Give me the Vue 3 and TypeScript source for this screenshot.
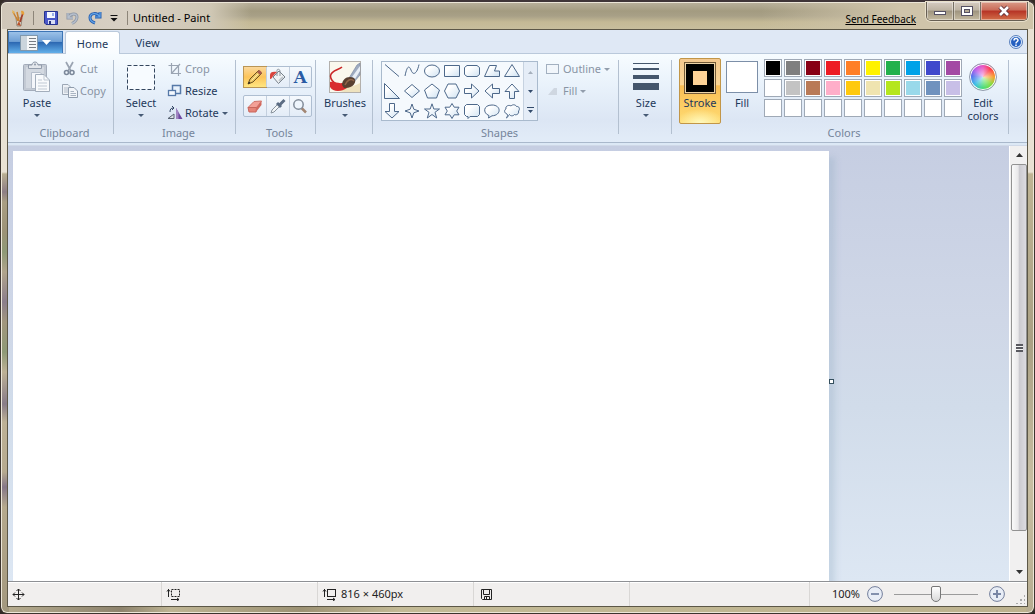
<script setup lang="ts">
import { ref } from 'vue'

const shapes: string[] = [
  'M1 1.5L15 13.5',
  'M1 13C3 3 5 2 7 7C9 13 13 11 15 1.5',
  'M15.5 8A7.5 6 0 1 1 .5 8A7.5 6 0 1 1 15.5 8Z',
  'M.5 2.5H15.5V13.5H.5Z',
  'M3 2.5H13L15.5 4.5V11.5L13 13.5H3L.5 11.5V4.5Z',
  'M.5 13.5L5.5 2.5H12.5L10.5 8H15.5V13.5Z',
  'M8 1.5L15.5 13.5H.5Z',
  'M.5 .5V15.5H15.5Z',
  'M8 1.5L15.5 8L8 14.5L.5 8Z',
  'M8 1L15.5 7L12.5 15H3.5L.5 7Z',
  'M4 1H12L15.5 8L12 15H4L.5 8Z',
  'M.5 5.5H7.5V1L15 8L7.5 15V10.5H.5Z',
  'M15.5 5.5H8.5V1L1 8L8.5 15V10.5H15.5Z',
  'M5.5 15.5V8.5H1L8 1L15 8.5H10.5V15.5Z',
  'M5.5 .5V8.5H1L8 15L15 8.5H10.5V.5Z',
  'M8 1L9.8 6.2L15 8L9.8 9.8L8 15L6.2 9.8L1 8L6.2 6.2Z',
  'M8 .8L9.8 6H15.5L11 9.3L12.7 15L8 11.5L3.3 15L5 9.3L.5 6H6.2Z',
  'M8 .5L10.2 4.2H15L12.7 8L15 11.8H10.2L8 15.5L5.8 11.8H1L3.3 8L1 4.2H5.8Z',
  'M2.5 1.5H13.5L15.5 3.5V11.5L13.5 13.5H6L4 15.5V13.5H2.5L.5 11.5V3.5Z',
  'M5 12.6C-1.5 10 -.8 2 8 2C17.5 2 17.5 12.5 8 12.8L4.5 15Z',
  'M3 11C0 10 0 7 2 6C1 3 5 1.5 7 3C9 .8 12 2 12.5 3.5C15 3 16.5 6 14.5 8C15.5 11 12 12.5 10.5 11.5C9 13.5 6 13 5.5 11.5C4 13 4 14 2.5 15C3.500 13 4 12 3 11Z'
]

const colors: string[] = [
  '#000000', '#7f7f7f', '#880015', '#ed1c24', '#ff7f27', '#fff200', '#22b14c', '#00a2e8', '#3f48cc', '#a349a4',
  '#ffffff', '#c3c3c3', '#b97a57', '#ffaec9', '#ffc90e', '#efe4b0', '#b5e61d', '#99d9ea', '#7092be', '#c8bfe7',
  '#ffffff', '#ffffff', '#ffffff', '#ffffff', '#ffffff', '#ffffff', '#ffffff', '#ffffff', '#ffffff', '#ffffff'
]

const zoom = ref(100)
const tool = ref('Pencil')
</script>

<template>
  <div class="window">
    <header class="titlebar">
      <svg class="app-icon" width="16" height="18" viewBox="0 0 16 18">
        <path d="M5 9H11L10 17H6Z" fill="#d9d4c8" stroke="#85796a" stroke-width=".8" />
        <path d="M2 3L7 12M6 3L8 12" stroke="#c88130" stroke-width="1.500" />
        <path d="M12 4L9 13" stroke="#a3402a" stroke-width="1.800" />
        <path d="M10 2C12 1 14 3 13 6L10.500 5Z" fill="#e5a03c" />
        <path d="M1 1L4 3L2 5Z" fill="#e6b350" /><path d="M8 12L10 17L6 16Z" fill="#b9522b" />
      </svg>
      <span class="bar-sep"></span>
      <button class="quick save" aria-label="Save">
        <svg width="16" height="16" viewBox="0 0 16 16">
          <path d="M1.500 1.500H14.500V14.500H3L1.500 13Z" fill="#4a57c8" stroke="#26338f" />
          <path d="M4 2H12V8H4Z" fill="#f4f7ff" /><path d="M9 3H11V6H9Z" fill="#9ab0e8" />
          <path d="M5 10H12V14H5Z" fill="#d8def4" /><path d="M6 11H8V14H6Z" fill="#27337f" />
        </svg>
      </button>
      <button class="quick" aria-label="Undo">
        <svg width="16" height="16" viewBox="0 0 16 16"><path d="M3 3V8H8M3.500 7.500C6 3 12 3 12 7C12 10 10 12 7 13.500" fill="none" stroke="#8d96a5" stroke-width="3" /><path d="M3 3V8H8M3.500 7.500C6 3 12 3 12 7C12 10 10 12 7 13.500" fill="none" stroke="#b6bfcc" stroke-width="1.400" /></svg>
      </button>
      <button class="quick" aria-label="Redo">
        <svg width="16" height="16" viewBox="0 0 16 16"><path d="M13 2V7H8M12.500 6.500C10 2 3 3 3 7.500C3 10 5 12 8 13" fill="none" stroke="#285fae" stroke-width="3" /><path d="M13 2V7H8M12.500 6.500C10 2 3 3 3 7.500C3 10 5 12 8 13" fill="none" stroke="#62a3e8" stroke-width="1.200" /></svg>
      </button>
      <button class="quick more" aria-label="Customize toolbar">
        <svg width="8" height="8" viewBox="0 0 8 8"><path d="M.5 1H7.500V2H.5ZM.5 4H7.500L4 7.500Z" fill="#111" /></svg>
      </button>
      <span class="bar-sep"></span>
      <h1>Untitled - Paint</h1>
      <a class="feedback" href="#">Send Feedback</a>
      <div class="controls">
        <button aria-label="Minimize"><svg width="14" height="10" viewBox="0 0 14 10"><rect x="1.500" y="5.500" width="11" height="3" fill="#fff" stroke="#555063" /></svg></button>
        <button aria-label="Maximize"><svg width="14" height="10" viewBox="0 0 14 10"><rect x="1.500" y=".5" width="11" height="9" fill="#fff" stroke="#555063" /><rect x="4.500" y="3.500" width="5" height="3" fill="#b5aa95" stroke="#555063" /></svg></button>
        <button class="close" aria-label="Close"><svg width="14" height="12" viewBox="0 0 14 12"><path d="M3 2L11 10M11 2L3 10" stroke="#5c3038" stroke-width="4.500" /><path d="M3 2L11 10M11 2L3 10" stroke="#fff" stroke-width="2.600" /></svg></button>
      </div>
    </header>

    <main class="client">
      <nav class="tabs">
        <button class="file" aria-label="Paint menu">
          <svg width="18" height="16" viewBox="0 0 18 16">
            <rect x=".5" y=".5" width="17" height="15" fill="#f5f7f8" stroke="#8098ac" />
            <path d="M1 1H7V15H1Z" fill="#cbd5dc" /><path d="M9 3.500H16M9 6.500H16M9 9.500H16M9 12.500H16" stroke="#777d83" />
          </svg>
          <svg width="9" height="5" viewBox="0 0 9 5"><path d="M0 0H9L4.500 5Z" fill="#fff" /></svg>
        </button>
        <button class="tab active">Home</button>
        <button class="tab">View</button>
        <button class="help" aria-label="Help">
          <svg width="14" height="14" viewBox="0 0 14 14"><circle cx="7" cy="7" r="6.500" fill="#dce9fb" stroke="#5c82bd" /><circle cx="7" cy="7" r="5" fill="#2560c0" /><path d="M5 5.500C5 3 9 3 9 5.300C9 6.800 7 6.700 7 8.500M7 9.500V11" fill="none" stroke="#fff" stroke-width="1.500" /></svg>
        </button>
      </nav>

      <div class="ribbon">
        <section class="group clipboard">
          <div class="body">
            <button class="big">
              <span class="pic">
                <svg width="30" height="34" viewBox="0 0 30 34">
                  <rect x="1.500" y="4.500" width="23" height="26" rx="1" fill="#c3cad4" stroke="#a3acba" />
                  <rect x="4" y="7" width="18" height="21" fill="#d3d9e1" />
                  <path d="M6.500 8.500V5H10C10 1 16 1 16 5H19.500V8.500Z" fill="#e3e7ec" stroke="#929dac" /><circle cx="13" cy="4.500" r="1" fill="#8d99a9" />
                  <path d="M9.500 12.500H18L22 16V28.500H9.500Z" fill="#f4f6fa" stroke="#b4bdca" />
                  <path d="M13.500 14.500H22L27.500 20V31.500H13.500Z" fill="#f8fafc" stroke="#a3aebc" />
                  <path d="M22 15V20H27M16 20H20M16 23H25M16 26H25M16 29H25" fill="none" stroke="#c0c9d4" />
                </svg>
              </span>
              <span>Paste</span><i class="arrow"></i>
            </button>
            <div class="stack">
              <button class="small dim"><svg width="16" height="16" viewBox="0 0 16 16"><path d="M4 1L9 10M11 1L6 10" stroke="#9aa4b2" stroke-width="1.700" /><circle cx="4.500" cy="11.500" r="2" fill="none" stroke="#7c899b" stroke-width="1.600" /><circle cx="10" cy="11.500" r="2" fill="none" stroke="#7c899b" stroke-width="1.600" /></svg>Cut</button>
              <button class="small dim"><svg width="16" height="16" viewBox="0 0 16 16"><path d="M.5 1.500H6L8.500 4V11.500H.5Z" fill="#edf1f6" stroke="#9ca7b5" /><path d="M2 5H6M2 7H6M2 9H6" stroke="#b4bdc9" /><path d="M6.500 4.500H12L15.500 8V14.500H6.500Z" fill="#f2f5f9" stroke="#8f9cac" /><path d="M8.500 8.500H12M8.500 10.500H14M8.500 12.500H14" stroke="#a9b4c2" /></svg>Copy</button>
            </div>
          </div>
          <h2>Clipboard</h2>
        </section>

        <section class="group image">
          <div class="body">
            <button class="big">
              <span class="pic"><svg width="30" height="34" viewBox="0 0 30 34"><rect x="1.500" y="5.500" width="27" height="24" fill="#f7fbff" stroke="#34465e" stroke-dasharray="4 2" /></svg></span>
              <span>Select</span><i class="arrow"></i>
            </button>
            <div class="stack">
              <button class="small dim"><svg width="16" height="16" viewBox="0 0 16 16"><path d="M4.500 2V12.500H14M1.500 4.500H11.500V15M5 12L13 3" fill="none" stroke="#9aa4b2" stroke-width="1.200" /></svg>Crop</button>
              <button class="small"><svg width="16" height="16" viewBox="0 0 16 16"><rect x="5.500" y="2.500" width="8" height="8" fill="#e8f2fc" stroke="#5679a8" stroke-width="1.500" /><rect x="1.500" y="7.500" width="7" height="5" fill="#f5faff" stroke="#5679a8" stroke-width="1.300" /></svg>Resize</button>
              <button class="small"><svg width="16" height="16" viewBox="0 0 16 16"><path d="M9 3V14H15.500Z" fill="#6d48a0" /><path d="M9 3V14H11.500V7Z" fill="#a185c1" /><path d="M1 13.500L7 9V13.500Z" fill="#dce1e6" stroke="#586372" /><path d="M3 7C3 4 4 3 6.500 3M5 1L7 3L5 5" fill="none" stroke="#344765" /></svg>Rotate<i class="arrow"></i></button>
            </div>
          </div>
          <h2>Image</h2>
        </section>

        <section class="group tools">
          <div class="body tool-rows">
            <div class="tool-row">
              <button :class="{ on: tool === 'Pencil' }" aria-label="Pencil" @click="tool = 'Pencil'"><svg width="18" height="18" viewBox="0 0 18 18"><path d="M2 16L4 11L12.500 2.500L15.500 5.500L7 14Z" fill="#eac365" stroke="#6b521e" /><path d="M11 4L14 7L16 4.500L13.500 2Z" fill="#a95c4d" /><path d="M5.500 12.500L12 6" stroke="#fff0a6" /><path d="M2 16L3 13.500L4.500 15Z" fill="#222" /></svg></button>
              <button :class="{ on: tool === 'Bucket' }" aria-label="Fill with color" @click="tool = 'Bucket'"><svg width="18" height="18" viewBox="0 0 18 18"><path d="M4 9L10 3L16 9L9.500 15.500Z" fill="#eff2f4" stroke="#77818b" /><path d="M8 8V2.500C8 .5 11 1 11 3V8" fill="none" stroke="#8b949e" /><path d="M8 4C4 3 1 4 1 7V11C3 11 3 9 5 7Z" fill="#d9443d" /><path d="M10 13L14 9" stroke="#c0c7cd" stroke-width="2" /></svg></button>
              <button :class="{ on: tool === 'Text' }" class="letter" @click="tool = 'Text'">A</button>
            </div>
            <div class="tool-row">
              <button :class="{ on: tool === 'Eraser' }" aria-label="Eraser" @click="tool = 'Eraser'"><svg width="18" height="18" viewBox="0 0 18 18"><path d="M2 10.500L8 4.500L15.500 4L10.500 10.500Z" fill="#f3a096" stroke="#d0746a" /><path d="M2 10.500H10.500L10 15H3Z" fill="#e58478" stroke="#c9665c" /><path d="M10.500 10.500L15.500 4V8L10 15Z" fill="#d2695e" /></svg></button>
              <button :class="{ on: tool === 'Picker' }" aria-label="Color picker" @click="tool = 'Picker'"><svg width="18" height="18" viewBox="0 0 18 18"><path d="M2 16L3 13L9 7L11 9L5 15Z" fill="#f3f6f8" stroke="#89939d" /><path d="M8 6L12 10M10.500 8L15.500 3" stroke="#5c6d84" stroke-width="3" /></svg></button>
              <button :class="{ on: tool === 'Zoom' }" aria-label="Magnifier" @click="tool = 'Zoom'"><svg width="18" height="18" viewBox="0 0 18 18"><path d="M10.500 11L15 15.500" stroke="#a28673" stroke-width="2.500" /><circle cx="7.500" cy="7.500" r="4.700" fill="#eef5fc" stroke="#818c99" stroke-width="1.500" /></svg></button>
            </div>
          </div>
          <h2>Tools</h2>
        </section>

        <section class="group brushes">
          <div class="body">
            <button class="big">
              <span class="pic">
                <svg width="32" height="32" viewBox="0 0 32 32">
                  <rect x=".5" y=".5" width="31" height="31" fill="#faf8ed" stroke="#b3b0ac" />
                  <path d="M1 28L15 31H31V22C22 28 10 24 1 28Z" fill="#eee2be" />
                  <path d="M13 6C10 9 2 9 1.500 15C1.500 19 5 22 9 24" fill="none" stroke="#c92524" stroke-width="1.500" />
                  <path d="M1 21C6 20 10 24 17 21L18 27C12 31 4 31 1 26Z" fill="#d92c2e" />
                  <path d="M20 17L28 4L31 2V14L25 21Z" fill="#9eabc0" stroke="#76839c" stroke-width=".6" /><path d="M23 16L31 5V10L26 18Z" fill="#e8eef5" />
                  <path d="M13 24C13 18 19 14 25 17C29 21 23 28 15 27Z" fill="#594030" /><path d="M16 24C18 19 22 17 25 20" fill="none" stroke="#91664a" stroke-width="1.500" />
                </svg>
              </span>
              <span>Brushes</span><i class="arrow"></i>
            </button>
          </div>
        </section>

        <section class="group shapes">
          <div class="body">
            <div class="gallery">
              <div class="shape-grid">
                <button v-for="(d, i) in shapes" :key="i" :aria-label="`Shape ${i + 1}`">
                  <svg width="16" height="16" viewBox="0 0 16 16">
                    <defs><linearGradient :id="`g${i}`" x2="1" y2="1"><stop offset=".3" stop-color="#fff" /><stop offset="1" stop-color="#cfe2f2" /></linearGradient></defs>
                    <path :d="d" :fill="i < 2 ? 'none' : `url(#g${i})`" stroke="#4d688a" />
                  </svg>
                </button>
              </div>
              <div class="gallery-nav">
                <button aria-label="Previous shapes"><svg width="7" height="8" viewBox="0 0 7 8"><path d="M1 6H6L3.500 3Z" fill="#a5afbc" /></svg></button>
                <button aria-label="Next shapes"><svg width="7" height="8" viewBox="0 0 7 8"><path d="M1 3H6L3.500 6Z" fill="#334b6b" /></svg></button>
                <button aria-label="All shapes"><svg width="7" height="8" viewBox="0 0 7 8"><path d="M0 1H7V2H0ZM1 4H6L3.500 7Z" fill="#334b6b" /></svg></button>
              </div>
            </div>
            <div class="stack">
              <button class="small dim"><svg width="16" height="16" viewBox="0 0 16 16"><rect x="1.500" y="3.500" width="12" height="9" fill="#f1f6fb" stroke="#a2b0c0" /></svg>Outline<i class="arrow"></i></button>
              <button class="small dim"><svg width="16" height="16" viewBox="0 0 16 16"><path d="M3 12L9 5L12 5V12Z" fill="#cfd7e1" /></svg>Fill<i class="arrow"></i></button>
            </div>
          </div>
          <h2>Shapes</h2>
        </section>

        <section class="group size">
          <div class="body">
            <button class="big">
              <span class="pic"><svg width="26" height="32" viewBox="0 0 26 32"><path d="M0 2H26V3H0ZM0 7H26V9H0ZM0 14H26V18H0ZM0 22H26V29H0Z" fill="#44566c" /></svg></span>
              <span>Size</span><i class="arrow"></i>
            </button>
          </div>
        </section>

        <section class="group colors">
          <div class="body">
            <button class="big stroke"><span class="pic"><b class="swatch ink"></b></span><span>Stroke</span></button>
            <button class="big fill"><span class="pic"><b class="swatch"></b></span><span>Fill</span></button>
            <div class="palette">
              <button v-for="(c, i) in colors" :key="i" :style="{ backgroundColor: c }" :aria-label="`Color ${i + 1}`"></button>
            </div>
            <button class="big edit"><span class="pic"><b class="wheel"></b></span><span>Edit colors</span></button>
          </div>
          <h2>Colors</h2>
        </section>
      </div>

      <div class="workspace">
        <div class="desk">
          <div class="paper"><span class="handle"></span></div>
        </div>
        <div class="scroll">
          <button aria-label="Scroll up"><svg width="7" height="4" viewBox="0 0 7 4"><path d="M0 4H7L3.500 0Z" fill="#333" /></svg></button>
          <div class="track"><div class="thumb"><i></i></div></div>
          <button aria-label="Scroll down"><svg width="7" height="4" viewBox="0 0 7 4"><path d="M0 0H7L3.500 4Z" fill="#333" /></svg></button>
        </div>
      </div>

      <footer class="status">
        <div class="cell"><svg width="13" height="13" viewBox="0 0 13 13"><path d="M6.500 1V12M1 6.500H12M4.500 3L6.500 1L8.500 3M4.500 10L6.500 12L8.500 10M3 4.500L1 6.500L3 8.500M10 4.500L12 6.500L10 8.500" fill="none" stroke="#222" /></svg></div>
        <div class="cell"><svg width="15" height="13" viewBox="0 0 15 13"><path d="M2.500 1V9M1 3.500L2.500 1.500L4 3.500M5 11.500H13M11 10L13 11.500L11 13" fill="none" stroke="#222" /><rect x="5.500" y="1.500" width="8" height="7" fill="none" stroke="#222" stroke-dasharray="2 1" /></svg></div>
        <div class="cell"><svg width="15" height="13" viewBox="0 0 15 13"><path d="M2.500 1V9M1 3.500L2.500 1.500L4 3.500M5 11.500H13M11 10L13 11.500L11 13" fill="none" stroke="#222" /><rect x="5.500" y="1.500" width="8" height="7" fill="none" stroke="#222" /></svg>816 × 460px</div>
        <div class="cell disk"><svg width="13" height="13" viewBox="0 0 13 13"><path d="M1.500 1.500H11.500V11.500H2.500L1.500 10.500ZM3.500 1.500V6.500H9.500V1.500M4.500 11.500V8.500H9.500V11.500M6.500 9V11" fill="none" stroke="#222" /></svg></div>
        <div class="cell spare"></div>
        <div class="zoom">
          <label for="zoom">{{ zoom }}%</label>
          <button aria-label="Zoom out" @click="zoom = Math.max(0, zoom - 10)"><svg width="16" height="16" viewBox="0 0 16 16"><circle cx="8" cy="8" r="7.400" fill="#e8edf6" stroke="#737e9b" /><path d="M4 7H12V9H4Z" fill="#8390ad" /></svg></button>
          <input id="zoom" v-model.number="zoom" type="range" min="0" max="200">
          <button aria-label="Zoom in" @click="zoom = Math.min(200, zoom + 10)"><svg width="16" height="16" viewBox="0 0 16 16"><circle cx="8" cy="8" r="7.400" fill="#e8edf6" stroke="#737e9b" /><path d="M4 7H7V4H9V7H12V9H9V12H7V9H4Z" fill="#7886a5" /></svg></button>
          <i class="grip"></i>
        </div>
      </footer>
    </main>
  </div>
</template>

<style>
body { background: #332b27; }
</style>

<style scoped>
* { box-sizing: border-box; }
button { font: inherit; color: inherit; background: none; border: 0; padding: 0; margin: 0; }
svg { display: block; flex: none; }
h1, h2 { margin: 0; font: inherit; }

.window {
  height: 100vh;
  display: flex;
  flex-direction: column;
  padding: 0 6px 6px;
  border: 1px solid #3c342e;
  border-top: 2px solid #3f3538;
  border-radius: 7px;
  font: 11px/16px "Noto Sans", "Open Sans", sans-serif;
  color: #1e395b;
  background:
    linear-gradient(90deg, #cfc6b8 0, #d8d0c4 130px, #cfc7b4 210px, #cfc7b400 250px) 0 0 / 100% 27px no-repeat,
    linear-gradient(90deg, #c5b89c00 760px, #cfc4aa 900px) 0 0 / 100% 27px no-repeat,
    linear-gradient(#b9b19c 0, #a39b80 9px, #a8a087 14px, #c4b995 20px, #c8be9d 27px) 0 0 / 100% 27px no-repeat,
    linear-gradient(#e8e1d3 0 170px, #b8ae92 172px, #8d7e86 190px, #a99e83 200px, #9c9277 230px, #8e9976 250px, #b0a48c 270px, #8b7e8b 300px, #a1967e 320px, #8e9976 350px, #bdb196 370px, #887c88 402px, #bdb196 420px, #b6aa8f 470px, #867888 485px, #b5a98d 505px, #a3987e 100%) 0 0 / 8px 100% no-repeat,
    linear-gradient(#e8e1d3 0 170px, #bfb494 172px, #aaa084 340px, #c8bea2 480px, #b7ad91 100%) 100% 0 / 8px 100% no-repeat,
    linear-gradient(90deg, #b7ad90, #8e836d 120px, #beb493 170px, #9d9274 300px, #c3ba96 400px, #bdb28e);
  box-shadow: inset 0 0 0 1px #ece6d8;
}

.titlebar { flex: none; height: 27px; display: flex; align-items: center; padding-left: 4px; padding-top: 4px; color: #000; }
.app-icon { margin-right: 6px; }
.bar-sep { width: 1px; height: 14px; background: #8d8579; }
.quick { width: 22px; height: 18px; display: grid; place-items: center; }
.save { margin-left: 6px; }
.more { width: 16px; margin-right: 5px; }
.bar-sep + h1 { margin-left: 5px; margin-top: 1px; }
.feedback { margin-left: auto; margin-right: 10px; margin-top: 2px; color: #000; font-size: 10px; }
.controls { display: flex; align-self: flex-start; height: 19px; margin-top: -4px; border: 1px solid #675f53; border-top: 0; border-radius: 0 0 5px 5px; overflow: hidden; box-shadow: 0 0 0 1px #e9e0cb; }
.controls button { width: 27px; display: grid; place-items: center; background: linear-gradient(#d5cbc0, #bdb3a3 45%, #9e947f 50%, #c5baa0); border-right: 1px solid #777063; box-shadow: inset 0 0 0 1px #ffffff66; }
.controls .close { width: 46px; border: 0; background: linear-gradient(#d99b87, #c96b58 45%, #b63325 50%, #d26e49); }

.client { flex: 1; min-height: 0; display: flex; flex-direction: column; border: 1px solid #5c5747; background: #dce8f5; }

.tabs { flex: none; display: flex; height: 24px; padding-top: 1px; background: #dfe8f5; border-bottom: 1px solid #bac9db; }
.file { width: 55px; margin-right: 2px; display: flex; align-items: center; justify-content: center; gap: 4px; border: 1px solid #3d75b5; border-bottom: 0; background: linear-gradient(#9bc1e8 0, #6e9fd4 45%, #2d69b3 50%, #62b0ea); }
.tab { width: 55px; height: 23px; border: 1px solid transparent; }
.tab.active { height: 24px; background: linear-gradient(#fff, #f8fcff); border-color: #bac9db; border-bottom: 0; border-radius: 3px 3px 0 0; }
.help { margin-left: auto; width: 22px; display: grid; place-items: center; }

.ribbon { flex: none; display: flex; padding: 4px 0 0; background: linear-gradient(#f7fcff 0, #e9f2fb 35%, #dce6f4 75%, #e2ecf8); border-bottom: 1px solid #a9b8cb; }
.group { position: relative; display: flex; flex-direction: column; border-right: 1px solid; border-image: linear-gradient(transparent 4%, #b3c0d0 4% 90%, transparent 90%) 1; }
.clipboard { width: 106px; }
.image { width: 122px; }
.tools { width: 80px; }
.brushes { width: 57px; }
.shapes { width: 246px; }
.size { width: 53px; }
.colors { width: 337px; }
.body { display: flex; height: 66px; padding-left: 7px; }
h2 { height: 18px; line-height: 18px; padding-left: 8px; text-align: center; color: #75859b; }

.big { width: 42px; height: 66px; display: flex; flex-direction: column; align-items: center; line-height: 13px; flex: none; }
.pic { height: 38px; flex: none; display: grid; place-items: center; }
.arrow { width: 0; height: 0; border: 3px solid transparent; border-top-color: #465a75; border-bottom: 0; }
.big .arrow { margin-top: 5px; }
.stack { display: flex; flex-direction: column; align-items: flex-start; }
.small { height: 22px; display: flex; align-items: center; gap: 2px; white-space: nowrap; }
.small .arrow { margin-left: 1px; }
.dim { color: #8994a4; }
.dim .arrow { border-top-color: #929dac; }
.clipboard .body { padding-left: 8px; }
.clipboard .stack { margin-left: 4px; }
.image .body { padding-left: 6px; }
.image .stack { margin-left: 5px; }
.brushes .body { padding-left: 8px; }
.size .body { padding-left: 6px; }

.tool-rows { flex-direction: column; gap: 7px; padding: 8px 3px 0 7px; }
.tool-row { display: grid; grid-template-columns: repeat(3, 1fr); height: 22px; border: 1px solid #aebed1; border-radius: 2px; background: linear-gradient(#f5f9fd, #e3ecf7); }
.tool-row button { display: grid; place-items: center; }
.tool-row button + button { border-left: 1px solid #c3cfde; }
.tool-row .on { background: linear-gradient(#fbd89c, #fcc45a 50%, #ffe681); box-shadow: 0 0 0 1px #b99555; }
.tool-row .letter { font: bold 20px/20px "DejaVu Serif", "Liberation Serif", serif; font-size: 17px; color: #2a5ba4; }

.shapes .body { padding: 3px 0 0 8px; }
.shapes .stack { margin: -3px 0 0 7px; }
.gallery { display: flex; height: 60px; border: 1px solid #a9bacd; background: #f5f9fd; }
.shape-grid { display: grid; grid-template: repeat(3, 20px) / repeat(7, 20px); align-content: center; padding-right: 1px; }
.shape-grid button { display: grid; place-items: center; }
.gallery-nav { width: 14px; display: grid; grid-template-rows: repeat(3, 1fr); background: #e5edf7; border-left: 1px solid #c6d2e0; }
.gallery-nav button { display: grid; place-items: center; }

.swatch { width: 32px; height: 32px; border: 1px solid #7c8fa8; background: #fff; }
.stroke { border: 1px solid #c29648; border-radius: 2px; background: radial-gradient(ellipse 24px 14px at 50% 100%, #fffac0, #fffac000), linear-gradient(#f3c890 0, #fbd595 40%, #f9bd55 42%, #ffdc72); }
.stroke .pic { height: 37px; }
.ink { border-color: #735a38; background: linear-gradient(#fdd297, #fdd297) center / 14px 14px no-repeat, #000; box-shadow: inset 0 0 0 1px #eed4a8; }
.palette { display: grid; grid-template: repeat(3, 18px) / repeat(10, 18px); gap: 2px; padding-top: 1px; margin-left: 1px; }
.palette button { border: 1px solid #9fa9b6; box-shadow: inset 0 0 0 1px #fff; }
.wheel { width: 28px; height: 28px; border: 1px solid #939cac; border-radius: 50%; background: radial-gradient(#ffffffb0 0, #fff0 60%), conic-gradient(#e855bf, #ff3948 12%, #f7a32e 25%, #80de3e 37%, #48db79 50%, #3cbee6 63%, #5674ee 76%, #bd5bea 88%, #e855bf); box-shadow: inset 0 0 0 1px #fff; }

.workspace { flex: 1; min-height: 0; display: flex; margin-top: 2px; background: #e5effa; border-top: 1px solid #d0d9e8; }
.desk { flex: 1; min-width: 0; overflow: hidden; padding: 5px 0 0 5px; background: linear-gradient(#c6cee2, #cfd7e7 40%, #d1dcea 60%, #dde7f3); }
.paper { position: relative; width: 816px; height: 460px; background: #fff; box-shadow: 6px 6px 6px #8fa8c04d; }
.handle { position: absolute; top: 50%; left: 100%; width: 5px; height: 5px; margin-top: -2px; border: 1px solid #344f5e; background: #fff; }
.scroll { width: 18px; flex: none; display: flex; flex-direction: column; padding-left: 1px; background: #f1f0f0; border-left: 1px solid #fff; }
.scroll button { height: 18px; flex: none; display: grid; place-items: center; }
.track { flex: 1; }
.thumb { height: 92%; display: grid; place-items: center; border: 1px solid #929292; border-radius: 2px; background: linear-gradient(90deg, #fafafa, #e8e7e9 45%, #cbcacf 50%, #dcdbe0); }
.thumb i { width: 7px; height: 8px; background: repeating-linear-gradient(#595960 0 2px, #f5f5f5 2px 3px); }

.status { flex: none; height: 25px; display: flex; color: #222; background: #f1efee; border-top: 1px solid #8e9094; box-shadow: inset 0 1px #fff; }
.cell { width: 156px; display: flex; align-items: center; gap: 4px; padding-left: 4px; border-right: 1px solid #d9d7d5; }
.cell:first-child { width: 154px; }
.disk { padding-left: 6px; }
.spare { width: 180px; }
.zoom { flex: 1; display: flex; align-items: center; justify-content: flex-end; gap: 7px; }
.zoom input { width: 84px; height: 18px; margin: 0 4px; appearance: none; background: linear-gradient(#9b9b9b, #9b9b9b) center / 100% 1px no-repeat; }
.zoom input::-webkit-slider-thumb { appearance: none; width: 10px; height: 16px; border: 1px solid #777; border-radius: 2px 2px 5px 5px; background: linear-gradient(#fff, #d9d9d9); }
.grip { width: 10px; height: 10px; margin: 0 2px 2px 3px; align-self: flex-end; background: radial-gradient(circle, #aaa 1px, transparent 1px) 0 0 / 4px 4px; clip-path: polygon(100% 0, 100% 100%, 0 100%); }
</style>
